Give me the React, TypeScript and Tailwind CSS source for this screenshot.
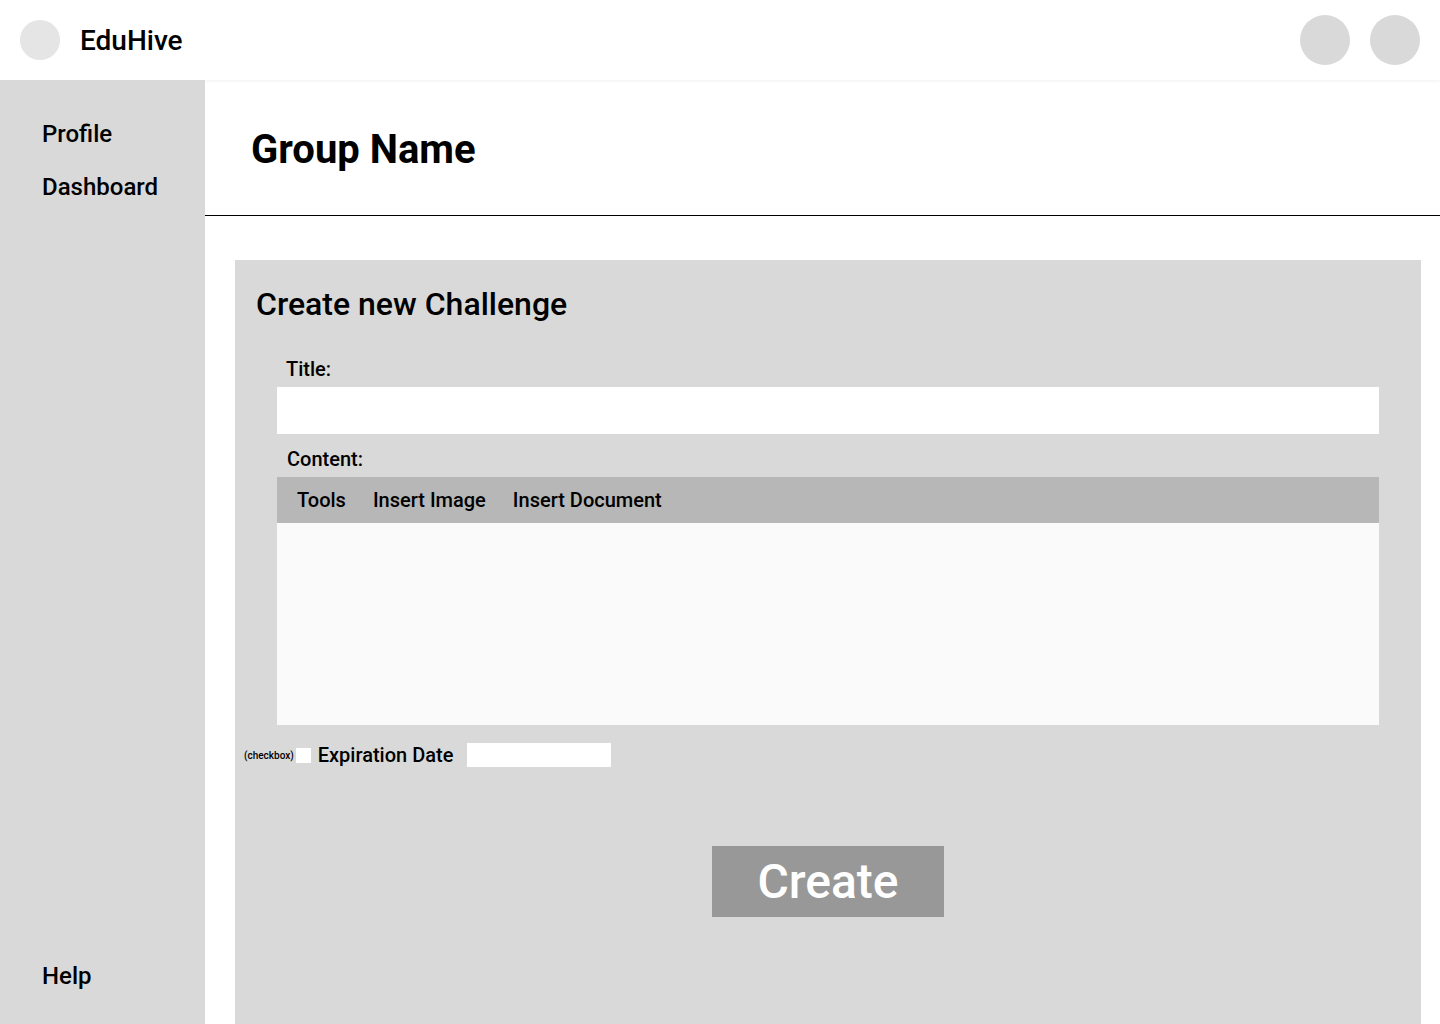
const font = { fontFamily: "Roboto, 'Liberation Sans', sans-serif" };

const Header = () => (
  <header className="flex h-20 shrink-0 items-center justify-between bg-white pl-5 pr-5 shadow-[0_1px_3px_rgba(0,0,0,0.06)]">
    <div className="flex items-center gap-5">
      <div className="h-10 w-10 rounded-full bg-[#e5e5e5]" />
      <span className="mt-0.5 text-[28px] font-medium leading-8 text-black">EduHive</span>
    </div>
    <div className="flex items-center gap-5">
      <div className="h-[50px] w-[50px] rounded-full bg-[#d9d9d9]" />
      <div className="h-[50px] w-[50px] rounded-full bg-[#d9d9d9]" />
    </div>
  </header>
);

const Sidebar = () => (
  <aside className="flex w-[205px] shrink-0 flex-col justify-between bg-[#d9d9d9] pb-[34px] pl-[42px] pt-10">
    <nav className="flex flex-col gap-[25px] text-2xl font-medium leading-7 text-black">
      <span>Profile</span>
      <span>Dashboard</span>
    </nav>
    <span className="text-2xl font-medium leading-7 text-black">Help</span>
  </aside>
);

const ChallengeForm = () => (
  <section className="ml-[30px] mr-[19px] mt-[44px] flex flex-1 flex-col bg-[#d9d9d9]">
    <h2 className="pl-[21px] pt-6 text-[32px] font-medium leading-10 text-black">Create new Challenge</h2>

    <div className="mt-[33px] px-[42px]">
      <label className="block pl-[9px] text-xl font-medium leading-6 text-black">Title:</label>
      <div className="mt-1.5 h-[47px] bg-white" />

      <label className="mt-[13px] block pl-[10px] text-xl font-medium leading-6 text-black">Content:</label>
      <div className="mt-1.5">
        <div className="flex h-[46px] items-center gap-[27px] bg-[#b7b7b7] pl-5 text-xl font-medium text-black">
          <span>Tools</span>
          <span>Insert Image</span>
          <span>Insert Document</span>
        </div>
        <div className="h-[202px] bg-[#fafafa]" />
      </div>
    </div>

    <div className="mt-[18px] flex h-6 items-center pl-[9px]">
      <span className="text-[10px] font-medium text-black">(checkbox)</span>
      <div className="ml-0.5 h-[15px] w-[15px] bg-white" />
      <span className="ml-[7px] text-xl font-medium text-black">Expiration Date</span>
      <div className="ml-[14px] h-6 w-[144px] bg-white" />
    </div>

    <div className="mt-[79px] flex justify-center">
      <button className="flex h-[71px] w-[232px] items-center justify-center bg-[#989898] text-5xl font-medium text-white">
        Create
      </button>
    </div>
  </section>
);

export default function App() {
  return (
    <div className="flex h-[1024px] w-full flex-col overflow-hidden bg-white" style={font}>
      <Header />
      <div className="flex flex-1">
        <Sidebar />
        <main className="flex flex-1 flex-col">
          <div className="h-[136px] shrink-0 border-b border-black pl-[47px] pt-[46px]">
            <h1 className="-ml-px text-[40px] font-bold leading-[48px] text-black">Group Name</h1>
          </div>
          <ChallengeForm />
        </main>
      </div>
    </div>
  );
}
